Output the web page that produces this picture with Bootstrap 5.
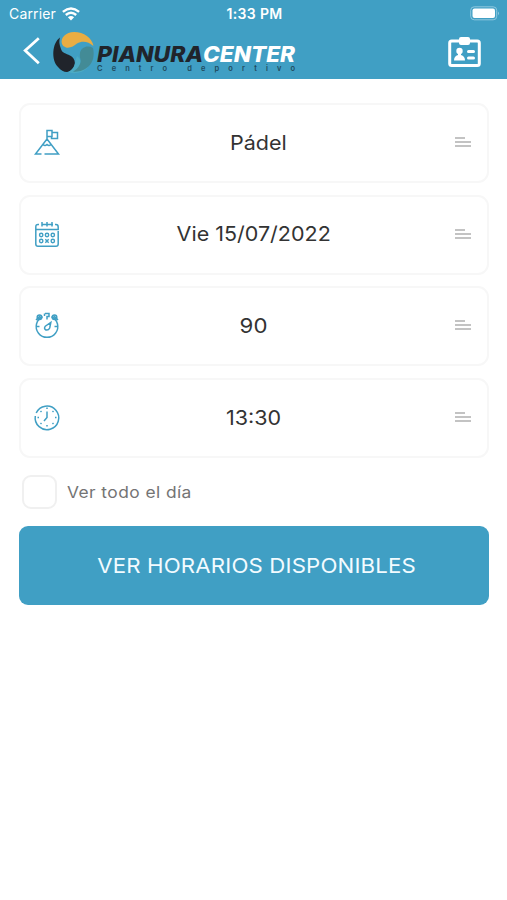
<!DOCTYPE html>
<html lang="es">
<head>
<meta charset="utf-8">
<meta name="viewport" content="width=device-width, initial-scale=1">
<title>Pianura Center</title>
<link href="https://cdn.jsdelivr.net/npm/bootstrap@5.3.0/dist/css/bootstrap.min.css" rel="stylesheet">
<style>
  :root { --brand: #409fc4; }
  body { font-family: Inter, "Liberation Sans", sans-serif; background: #fff; }
  .app-header { background: var(--brand); height: 79px; }
  .status-bar { height: 27px; font-size: 14px; line-height: 27px; padding: 0 7px 0 9px; }
  .status-bar > * { flex: 1 1 0; }
  .carrier { letter-spacing: .15px; }
  .clock { font-size: 14px; font-weight: 600; letter-spacing: .35px; }
  .title-bar { height: 52px; padding: 0 26px 0 22px; }
  .back { margin-bottom: 5px; }
  .member { margin-bottom: 2px; }
  .screen { padding: 24px 18px 0 19px; }
  .option { height: 80px; margin-bottom: 11.7px; border: 2px solid #f7f7f7; border-radius: 11px; background: #fff; padding: 0 15px 0 12px; }
  .option-value { font-size: 20px; color: #333; line-height: 30px; padding: 0 9px 1px 0; }
  .option-value.activity { padding-right: 0; }
  .wide { display: inline-block; transform: scaleX(1.075); }
  .wide-lg { display: inline-block; transform: scaleX(1.11); }
  .option svg { flex: none; }
  .option .grip { margin-bottom: 2px; }
  .line-icon { fill: none; stroke: var(--brand); stroke-width: 1.5; }
  .check-row { height: 34px; margin: 17px 0 17px 3px; }
  .check-row .form-check-input { width: 35px; height: 34px; border: 2px solid #f0f0f0; border-radius: 9px; }
  .check-row label { font-size: 16px; color: #747474; margin-left: 10px; letter-spacing: .4px; transform: scaleX(1.085); transform-origin: left; }
  .btn-brand { height: 79px; background: var(--brand); color: #f2fbff; border: 0; border-radius: 9px; font-size: 20px; padding-left: 18px; }
  .btn-brand { letter-spacing: .15px; }
  .btn-brand:hover { background: #358eb1; color: #fff; }
</style>
<script src="https://cdn.jsdelivr.net/npm/bootstrap@5.3.0/dist/js/bootstrap.bundle.min.js"></script>
</head>
<body>
<header class="app-header text-white">
  <div class="status-bar d-flex align-items-center">
    <div class="d-flex align-items-center">
      <span class="carrier">Carrier</span>
      <svg style="margin-left:6px" width="18" height="14" viewBox="0 0 18 14" fill="none" stroke="#fff" stroke-width="2.4"><path d="M.9 4.8Q9-2 17.100 4.800M3.800 8Q9 3.500 14.200 8"/><path d="M5.900 10.200Q9 7.600 12.100 10.200L9 13.500Z" fill="#fff" stroke="none"/></svg>
    </div>
    <div class="clock text-center">1:33 PM</div>
    <div class="d-flex justify-content-end">
      <svg width="30" height="15" viewBox="0 0 30 15"><rect x=".7" y=".8" width="26" height="13" rx="3.500" fill="none" stroke="#8fc8df"/><rect x="2.500" y="2.500" width="22.500" height="9.600" rx="2" fill="#fff"/><path d="M28 5.500Q30 7.300 28 9.200Z" fill="#8fc8df"/></svg>
    </div>
  </div>
  <div class="title-bar d-flex align-items-center">
    <svg class="back" width="20" height="30" viewBox="0 0 20 30" fill="none" stroke="#fff" stroke-width="2.800"><path d="M16.800 2.300L3.200 14.500L16.800 27.200"/></svg>
    <svg class="me-auto" width="260" height="46" viewBox="42 30 260 46">
      <path d="M60 37.500C52 43 51 60 58 67C62 72 67 73 70 71C77 67 76 58 70 55.500C66 53.500 62 53 61 49C59 44 59 41 60 37.500Z" fill="#20242b"/>
      <path d="M62 44C60 38 66 32 74 32C84 32 92 38 93.500 46C88 41 82 40.500 77 43.500C74 46 70 48.500 66 47.500Q63 47 62 44Z" fill="#e9ad43"/>
      <path d="M70 71C76 67 75 60 77 56C79 58 82 60 80 64L88 67C83 73 74 74.500 68 72Z" fill="#4cabc5"/>
      <path d="M93 48C88 45 81 47 80 53C79 58 82 60 80 64C78 68 76 70 73 71.500C82 73 97 66 93 48Z" fill="#438b96"/>
      <g font-family="Inter, sans-serif">
        <text x="97" y="62" font-size="21" font-weight="800" font-style="italic" textLength="106" lengthAdjust="spacingAndGlyphs" fill="#20242b">PIANURA</text>
        <text x="203" y="62" font-size="21" font-weight="800" font-style="italic" textLength="92" lengthAdjust="spacingAndGlyphs" fill="#fff">CENTER</text>
        <text x="97" y="71" font-size="7.500" font-weight="600" textLength="198" fill="#1f4b5e">Centro deportivo</text>
      </g>
    </svg>
    <svg class="member" width="33" height="32" viewBox="0 0 33 32"><rect x="1.700" y="5" width="29.600" height="24.500" rx="2" fill="none" stroke="#fff" stroke-width="3"/><rect x="11" y="1" width="11" height="8" rx="2" fill="#fff"/><circle cx="11.500" cy="15" r="3.200" fill="#fff"/><path d="M10 17H13V19Q17 20 17 24.500H6Q6 20 10 19Z" fill="#fff"/><path d="M20.500 15.500H25.500M20.500 22H25.500" stroke="#fff" stroke-width="3" stroke-linecap="round"/></svg>
  </div>
</header>

<main class="screen">
  <div class="option d-flex align-items-center">
    <svg class="line-icon" width="30" height="30" viewBox="0 0 30 30"><path d="M14 12V2.500H19V8.500H14M19 4.500H24.500V10.500H18.500V8.500M14 11L2.500 26H8.500M11.500 26H25.500L14 11M10 16.500Q12 18.500 14 16.500Q16 18.500 18 16.500"/></svg>
    <div class="option-value activity flex-fill text-center"><span class="wide">Pádel</span></div>
    <svg class="grip" width="18" height="12" viewBox="0 0 18 12" fill="#c3c3c3"><path d="M1 1H11V3H1ZM1 5H17V7H1ZM1 9H17V11H1Z"/></svg>
  </div>
  <div class="option d-flex align-items-center">
    <svg class="line-icon" width="30" height="30" viewBox="0 0 30 30"><path d="M6 4.500H5Q2.800 4.500 2.800 7V24Q2.800 26.300 5 26.300H23Q25.200 26.300 25.200 24V11M3 9.500H25.200V7Q25.200 4.500 23 4.500H22M8.500 4.500H20M9 2V6.500M14 2V6.500M19 2V6.500"/><g stroke-width="1.400"><circle cx="8.200" cy="15" r="1.700"/><circle cx="14" cy="15" r="1.700"/><circle cx="19.800" cy="15" r="1.700"/><circle cx="8.200" cy="21" r="1.700"/><circle cx="19.800" cy="21" r="1.700"/><path d="M12.300 19.200L15.700 22.800M15.700 19.200L12.300 22.800"/></g></svg>
    <div class="option-value flex-fill text-center"><span class="wide">Vie 15/07/2022</span></div>
    <svg class="grip" width="18" height="12" viewBox="0 0 18 12" fill="#c3c3c3"><path d="M1 1H11V3H1ZM1 5H17V7H1ZM1 9H17V11H1Z"/></svg>
  </div>
  <div class="option d-flex align-items-center">
    <svg class="line-icon" width="30" height="30" viewBox="0 0 30 30"><path d="M9.500 5.700A10.800 10.800 0 1 0 18.500 5.700M12 2.500H16V5.500H14V8.500M11.500 2.500V5M3 9L7.500 4.500M25 9L20.500 4.500M3.500 15.500H6.500M21.500 15.500H24.500"/><circle cx="6.500" cy="6.300" r="2.300"/><circle cx="21.500" cy="6.300" r="2.300"/><path d="M17.800 11.500L16.700 17Q15.500 19.500 13 19Q10.500 17.500 12.300 15.200Z"/></svg>
    <div class="option-value flex-fill text-center"><span class="wide-lg">90</span></div>
    <svg class="grip" width="18" height="12" viewBox="0 0 18 12" fill="#c3c3c3"><path d="M1 1H11V3H1ZM1 5H17V7H1ZM1 9H17V11H1Z"/></svg>
  </div>
  <div class="option d-flex align-items-center">
    <svg class="line-icon" width="30" height="30" viewBox="0 0 30 30"><path d="M3.200 10A11.800 11.800 0 1 1 2.300 13M14 8.500V14.500L11 18"/><path d="M14 4.500V6M14 22V23.500M4.500 14.500H6M22 14.500H23.500M7.500 8L8.500 9M20.500 8L19.500 9M7.500 21L8.500 20M20.500 21L19.500 20"/></svg>
    <div class="option-value flex-fill text-center"><span class="wide">13:30</span></div>
    <svg class="grip" width="18" height="12" viewBox="0 0 18 12" fill="#c3c3c3"><path d="M1 1H11V3H1ZM1 5H17V7H1ZM1 9H17V11H1Z"/></svg>
  </div>
  <div class="check-row d-flex align-items-center">
    <input class="form-check-input m-0" type="checkbox" id="allDay">
    <label for="allDay">Ver todo el día</label>
  </div>
  <button class="btn btn-brand w-100" type="button"><span class="wide-lg">VER HORARIOS DISPONIBLES</span></button>
</main>
</body>
</html>
